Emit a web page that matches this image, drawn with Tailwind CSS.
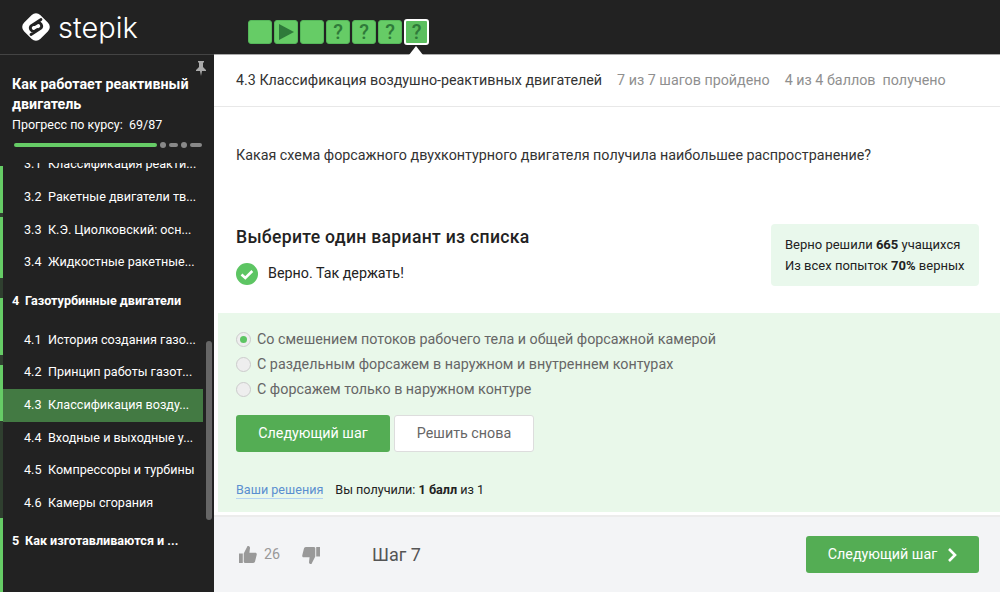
<!DOCTYPE html>
<html lang="ru">
<head>
<meta charset="UTF-8">
<title>Stepik</title>
<script src="https://cdn.jsdelivr.net/npm/@tailwindcss/browser@4"></script>
</head>
<body class="h-[592px] w-[1000px] overflow-hidden bg-white font-['Roboto',sans-serif] text-[#222]">
  <!-- top bar -->
  <header class="relative z-10 flex h-[54px] bg-[#222]">
    <div class="flex w-[248px] items-center pl-[21px]">
      <svg width="30" height="30" viewBox="0 0 30 30">
        <rect x="3.500" y="3.500" width="23" height="23" rx="6" transform="rotate(45 15 15)" fill="#fff"/>
        <path d="M20 7.500 10.500 13.500a3.300 3.300 0 0 0 3.500 5.500l2.500-1.500M10 22.500l9.500-6a3.300 3.300 0 0 0-3.500-5.500l-2.500 1.500" fill="none" stroke="#222" stroke-width="2.800" stroke-linecap="round"/>
      </svg>
      <span class="ml-[7px] font-['Inter',sans-serif] text-[29px] leading-none font-light text-white">stepik</span>
    </div>
    <div class="relative flex items-center gap-[2px] pt-[9px]">
      <div class="h-[24px] w-[24px] rounded-[3px] border border-[#55b75a] bg-[#66cc66]"></div>
      <div class="flex h-[24px] w-[24px] items-center justify-center rounded-[3px] border border-[#55b75a] bg-[#66cc66]">
        <svg width="16" height="16" viewBox="0 0 16 16"><path d="M1 0v16l15-8z" fill="#2f7a3a"/></svg>
      </div>
      <div class="h-[24px] w-[24px] rounded-[3px] border border-[#55b75a] bg-[#66cc66]"></div>
      <div class="flex h-[24px] w-[24px] items-center justify-center rounded-[3px] border border-[#55b75a] bg-[#66cc66] text-[20px] font-medium text-[#2f7a3a]">?</div>
      <div class="flex h-[24px] w-[24px] items-center justify-center rounded-[3px] border border-[#55b75a] bg-[#66cc66] text-[20px] font-medium text-[#2f7a3a]">?</div>
      <div class="flex h-[24px] w-[24px] items-center justify-center rounded-[3px] border border-[#55b75a] bg-[#66cc66] text-[20px] font-medium text-[#2f7a3a]">?</div>
      <div class="relative flex h-[26px] w-[25px] items-center justify-center rounded-[3px] border-2 border-white bg-[#5cbf5f] text-[20px] font-medium text-[#2f7a3a]">?
        <span class="absolute top-[25px] left-[3px] h-0 w-0 border-x-[7px] border-b-[9px] border-x-transparent border-b-white"></span>
      </div>
    </div>
  </header>

  <div class="flex h-[538px]">
    <!-- sidebar -->
    <aside class="relative flex w-[214px] shrink-0 flex-col overflow-hidden border-t border-[#444] bg-[#222] text-white">
      <div class="relative h-[108px] shrink-0 px-3 pt-[19px]">
        <svg class="absolute top-[6px] right-[8px]" width="10" height="15" viewBox="0 0 10 15"><path d="M2 0h6v1L7 2v4l3 3v1H6l-1 5-1-5H0V9l3-3V2L2 1z" fill="#aaa"/></svg>
        <h1 class="text-[14.300px] leading-[20px] font-bold">Как работает реактивный двигатель</h1>
        <p class="mt-[1px] text-[12.500px] leading-[20px]">Прогресс по курсу:&nbsp; 69/87</p>
        <div class="mt-[7px] ml-[2px] flex items-center">
          <div class="h-[4px] w-[143px] rounded-full bg-[#66cc66]"></div>
          <div class="ml-[3px] h-[6px] w-[6px] rounded-full bg-[#888]"></div>
          <div class="ml-[3px] h-[4px] w-[9px] rounded-full bg-[#888]"></div>
          <div class="ml-[3px] h-[6px] w-[6px] rounded-full bg-[#888]"></div>
          <div class="ml-[3px] h-[4px] w-[12px] rounded-full bg-[#888]"></div>
        </div>
      </div>
      <div class="min-h-0 flex-1 overflow-hidden">
        <nav class="-mt-[14.500px] flex flex-col text-[12.600px]">
          <div class="flex h-[32.600px] items-center pl-[24px]"><span class="w-[24px]">3.1</span>Классификация реакти...</div>
          <div class="flex h-[32.600px] items-center pl-[24px]"><span class="w-[24px]">3.2</span>Ракетные двигатели тв...</div>
          <div class="flex h-[32.600px] items-center pl-[24px]"><span class="w-[24px]">3.3</span>К.Э. Циолковский: осн...</div>
          <div class="flex h-[32.600px] items-center pl-[24px]"><span class="w-[24px]">3.4</span>Жидкостные ракетные...</div>
          <div class="flex h-[45px] items-center pl-3 font-bold"><span class="w-[13px]">4</span>Газотурбинные двигатели</div>
          <div class="flex h-[32.600px] items-center pl-[24px]"><span class="w-[24px]">4.1</span>История создания газо...</div>
          <div class="flex h-[32.600px] items-center pl-[24px]"><span class="w-[24px]">4.2</span>Принцип работы газот...</div>
          <div class="mr-[11px] flex h-[32.600px] items-center bg-[#437a43] pl-[24px]"><span class="w-[24px]">4.3</span>Классификация возду...</div>
          <div class="flex h-[32.600px] items-center pl-[24px]"><span class="w-[24px]">4.4</span>Входные и выходные у...</div>
          <div class="flex h-[32.600px] items-center pl-[24px]"><span class="w-[24px]">4.5</span>Компрессоры и турбины</div>
          <div class="flex h-[32.600px] items-center pl-[24px]"><span class="w-[24px]">4.6</span>Камеры сгорания</div>
          <div class="flex h-[44px] items-center pl-3 font-bold"><span class="w-[13px]">5</span>Как изготавливаются и ...</div>
        </nav>
      </div>
      <!-- progress rail on the left edge -->
      <div class="absolute top-[111px] left-0 flex w-[3px] flex-col">
        <div class="h-[47px] bg-[#66cc66]"></div>
        <div class="h-[4px] bg-[#2f3f2f]"></div>
        <div class="h-[61px] bg-[#66cc66]"></div>
        <div class="h-[20px] bg-[#2f3f2f]"></div>
        <div class="h-[57px] bg-[#66cc66]"></div>
        <div class="h-[10px] bg-[#2f3f2f]"></div>
        <div class="h-[56px] bg-[#66cc66]"></div>
        <div class="h-[97px] bg-[#2f3f2f]"></div>
        <div class="h-[74px] bg-[#66cc66]"></div>
      </div>
      <div class="absolute top-[286px] right-[2px] h-[179px] w-[6px] rounded-full bg-[#666]"></div>
    </aside>

    <!-- main -->
    <main class="flex min-w-0 flex-1 flex-col border-t border-[#aaa]">
      <div class="flex h-[52px] shrink-0 items-center gap-[15px] border-b border-[#e8e8e8] pl-[22px] text-[14.300px] text-[#8f8f8f]">
        <span class="text-[#333]">4.3 Классификация воздушно-реактивных двигателей</span>
        <span>7 из 7 шагов пройдено</span>
        <span>4 из 4 баллов&nbsp; получено</span>
      </div>
      <div class="px-[22px] pt-[38px] text-[14.300px] leading-[20px] text-[#333]">Какая схема форсажного двухконтурного двигателя получила наибольшее распространение?</div>
      <div class="flex justify-between pt-[59px] pr-[21px] pl-[22px]">
        <div>
          <h2 class="mt-[1px] text-[17.600px] leading-[24px] font-medium tracking-[0.3px]">Выберите один вариант из списка</h2>
          <div class="mt-[14px] flex items-center gap-[10px] text-[14.300px]">
            <svg width="22" height="22" viewBox="0 0 22 22"><circle cx="11" cy="11" r="11" fill="#5dc563"/><path d="M5.500 11.500l3.800 3.500 7-7" fill="none" stroke="#fff" stroke-width="2.600"/></svg>
            Верно. Так держать!
          </div>
        </div>
        <div class="h-[62px] w-[208px] rounded-[4px] bg-[#e9f8ec] px-[14px] pt-[10px] text-[13px] leading-[21px]">
          Верно решили <b>665</b> учащихся<br>Из всех попыток <b>70%</b> верных
        </div>
      </div>
      <section class="mt-[27px] ml-[4px] h-[199px] shrink-0 bg-[#e9f8ea] pt-[14px] pl-[18px] text-[14.300px] text-[#666]">
        <div class="flex h-[25px] items-center gap-[6px]">
          <span class="flex h-[15px] w-[15px] items-center justify-center rounded-full border border-[#ccc] bg-[#eee]"><span class="h-[7px] w-[7px] rounded-full bg-[#5dc563]"></span></span>
          Со смешением потоков рабочего тела и общей форсажной камерой
        </div>
        <div class="flex h-[25px] items-center gap-[6px]">
          <span class="h-[15px] w-[15px] rounded-full border border-[#ccc] bg-[#eee]"></span>
          С раздельным форсажем в наружном и внутреннем контурах
        </div>
        <div class="flex h-[25px] items-center gap-[6px]">
          <span class="h-[15px] w-[15px] rounded-full border border-[#ccc] bg-[#eee]"></span>
          С форсажем только в наружном контуре
        </div>
        <div class="mt-[13px] flex gap-[4px]">
          <button class="h-[37px] w-[154px] rounded-[3px] bg-[#54ad54] text-white">Следующий шаг</button>
          <button class="h-[37px] w-[140px] rounded-[3px] border border-[#ddd] bg-white text-[#666]">Решить снова</button>
        </div>
        <div class="mt-[29px] flex gap-[12px] text-[12.600px] text-[#222]">
          <a class="border-b border-[#b6d4f2] leading-[17px] text-[#5a8fd0]">Ваши решения</a>
          <span class="leading-[17px]">Вы получили: <b>1 балл</b> из 1</span>
        </div>
      </section>
      <footer class="mt-[3px] flex flex-1 items-center border-t-2 border-[#ececec] bg-[#f3f4f6] pr-[21px] pl-[25px]">
        <svg width="18" height="18" viewBox="0 0 19 19"><path d="M0 8h4v10H0zM5 8l4-8c2 0 3 1 2.500 3L11 7h6c1.500 0 2 1 1.700 2.200l-1.700 7c-.3 1-1 1.800-2 1.800H7c-1 0-2-.5-2-1.500z" fill="#999"/></svg>
        <span class="ml-[7px] text-[14.300px] text-[#999]">26</span>
        <svg class="ml-[22px]" width="18" height="18" viewBox="0 0 19 19"><g transform="matrix(1 0 0 -1 0 19)"><path d="M15 8h4v10h-4zM14 8l-4-8C8 0 7 1 7.500 3L8 7H2C.5 7 0 8 .3 9.200l1.700 7c.3 1 1 1.800 2 1.800h8c1 0 2-.5 2-1.500z" fill="#999"/></g></svg>
        <span class="ml-[52px] text-[18px] text-[#555]">Шаг 7</span>
        <button class="ml-auto flex h-[37px] w-[173px] items-center justify-center gap-[10px] rounded-[3px] bg-[#54ad54] text-[14.300px] text-white">
          Следующий шаг
          <svg width="10" height="14" viewBox="0 0 10 14"><path d="M2 1l6 6-6 6" fill="none" stroke="#fff" stroke-width="2.600"/></svg>
        </button>
      </footer>
    </main>
  </div>
</body>
</html>
